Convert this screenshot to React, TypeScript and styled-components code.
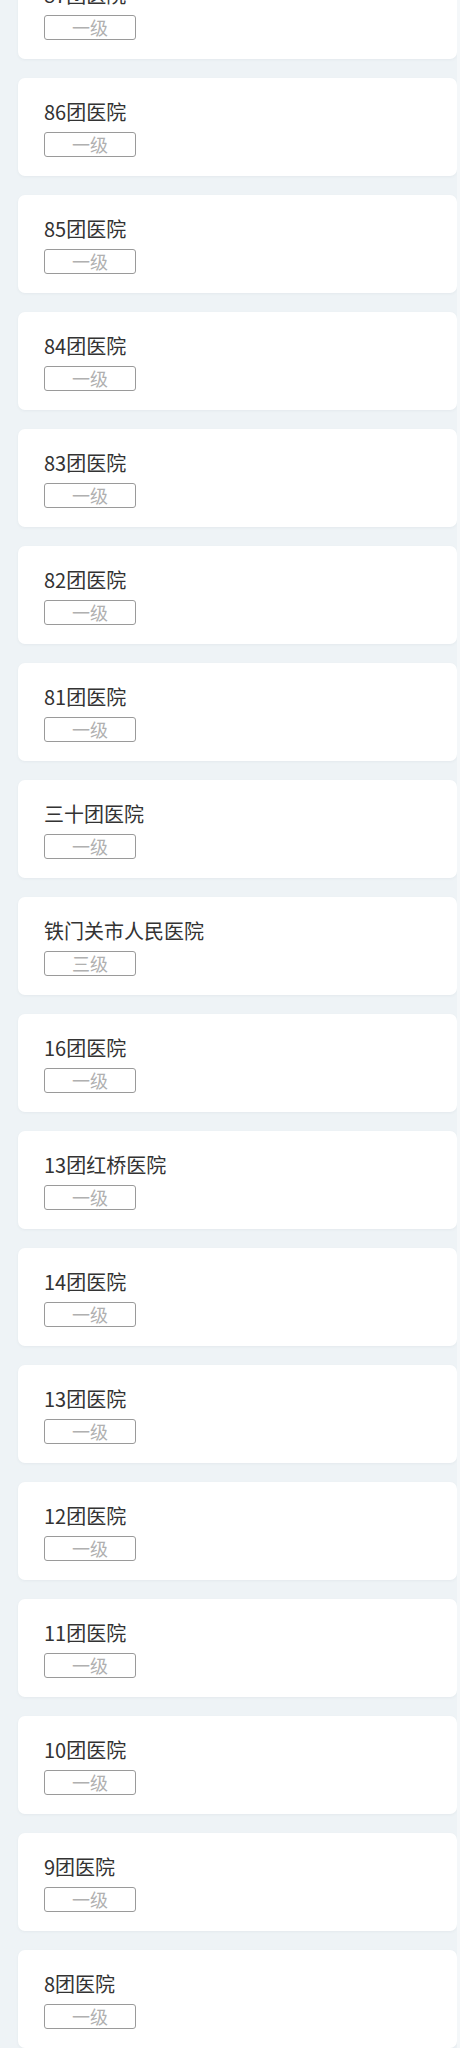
import React from "react";
import styled, { createGlobalStyle } from "styled-components";

const GlobalStyle = createGlobalStyle`
  html, body {
    margin: 0;
    padding: 0;
    background: #eef3f6;
  }
  body {
    font-family: "Noto Sans CJK SC", "Noto Sans", sans-serif;
  }
`;

const Page = styled.div`
  width: 460px;
  box-sizing: border-box;
  padding: 0 0 0 18px;
  background: #eef3f6;
  border-right: 3px solid #f4f7f9;
  overflow: hidden;
`;

const List = styled.div`
  display: flex;
  flex-direction: column;
  gap: 19px;
  margin-top: -39px;
`;

const Card = styled.div`
  box-sizing: border-box;
  height: 98px;
  background: #ffffff;
  border-radius: 7px;
  box-shadow: 0 1px 3px rgba(40, 60, 80, 0.05);
  padding: 20px 0 0 26px;
  display: flex;
  flex-direction: column;
  align-items: flex-start;
`;

const Title = styled.div`
  font-size: 20px;
  line-height: 28px;
  color: #333333;
  white-space: nowrap;
`;

const Badge = styled.div`
  margin-top: 6px;
  box-sizing: border-box;
  width: 92px;
  height: 25px;
  border: 1px solid #9a9a9a;
  border-radius: 3px;
  display: flex;
  align-items: center;
  justify-content: center;
  font-size: 18px;
  line-height: 23px;
  color: #b0b0b0;
`;

const hospitals: { name: string; level: string }[] = [
  { name: "87团医院", level: "一级" },
  { name: "86团医院", level: "一级" },
  { name: "85团医院", level: "一级" },
  { name: "84团医院", level: "一级" },
  { name: "83团医院", level: "一级" },
  { name: "82团医院", level: "一级" },
  { name: "81团医院", level: "一级" },
  { name: "三十团医院", level: "一级" },
  { name: "铁门关市人民医院", level: "三级" },
  { name: "16团医院", level: "一级" },
  { name: "13团红桥医院", level: "一级" },
  { name: "14团医院", level: "一级" },
  { name: "13团医院", level: "一级" },
  { name: "12团医院", level: "一级" },
  { name: "11团医院", level: "一级" },
  { name: "10团医院", level: "一级" },
  { name: "9团医院", level: "一级" },
  { name: "8团医院", level: "一级" },
];

export default function App() {
  return (
    <>
      <GlobalStyle />
      <Page>
        <List>
          {hospitals.map((h, i) => (
            <Card key={i}>
              <Title>{h.name}</Title>
              <Badge>{h.level}</Badge>
            </Card>
          ))}
        </List>
      </Page>
    </>
  );
}
